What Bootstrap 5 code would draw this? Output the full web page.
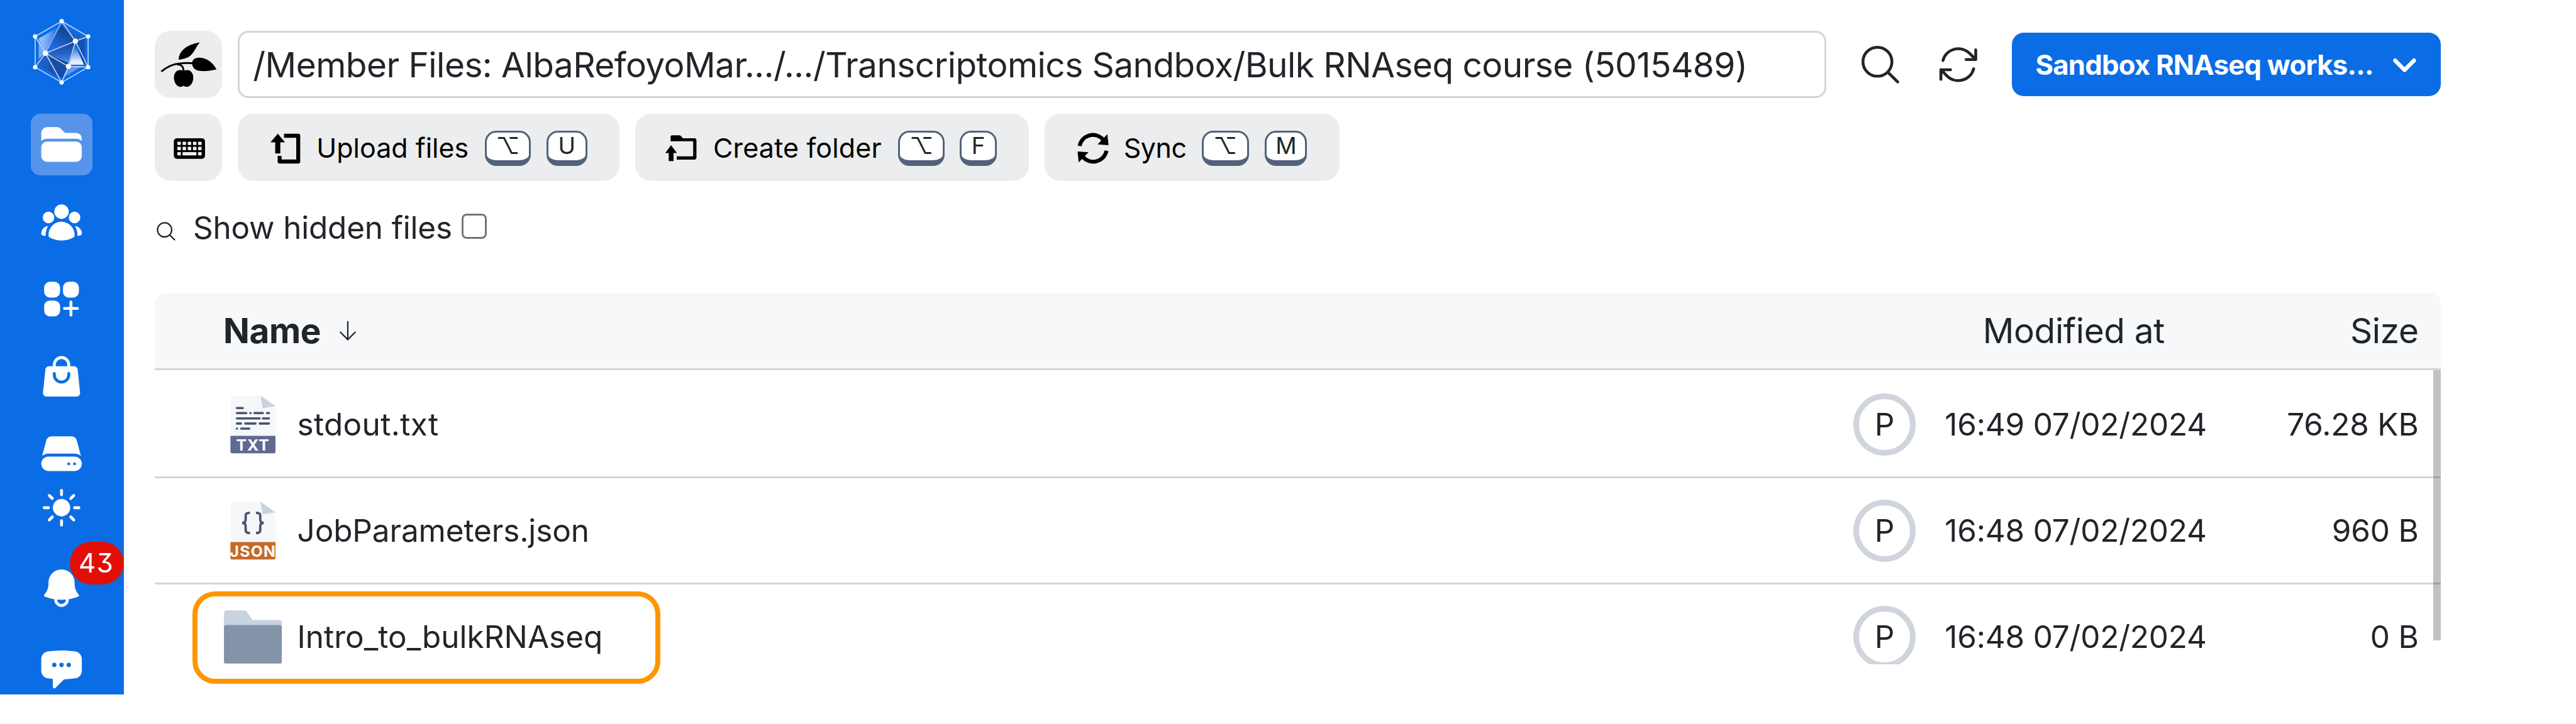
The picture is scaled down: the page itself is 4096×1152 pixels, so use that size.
<!DOCTYPE html>
<html lang="en">
<head>
<meta charset="utf-8">
<title>Files</title>
<link rel="stylesheet" href="https://cdn.jsdelivr.net/npm/bootstrap@5.3.0/dist/css/bootstrap.min.css">
<style>
body{font-family:Inter,"Liberation Sans",sans-serif;font-size:49.5px;line-height:1.2;color:#212529;background:#fff;width:4096px;height:1152px;overflow:hidden}
svg{display:block;flex:none}
span.t{white-space:nowrap}
.side-rail{width:196.6px;height:1105.4px;background:#0b6de6;color:#fff;padding-top:29.3px}
.rail-box{width:98.3px;height:98.3px;border-radius:15px}
.rail-box.on{background:#5694ec}
.rail-list{margin-top:44.7px;gap:24.6px}
.bell-item{margin-top:55.2px}
.chat-item{margin-top:55.3px}
.count-pill{top:-37px;left:49.2px;width:86.2px;height:68px;background:#e20f06;font-size:42px;letter-spacing:1.5px;font-feature-settings:"cv09","tnum"}
.main-area{margin-left:49px;width:3635.2px;padding-top:49px}
.soft-btn{background:#ecedef;border:0;border-radius:25px;height:107.4px;color:#000;font-size:43px;line-height:1.2}
.sq-btn{width:107.4px}
.tool-row{margin-top:24.5px;gap:24.6px}
.btn-upload{width:607.8px;padding:3px 0 0 50px}
.btn-create{width:626px;padding:3px 0 0 46.5px}
.btn-sync{width:469.8px;padding:3px 0 0 51px}
.path-field{width:2526.4px;height:107.4px;border:3px solid #cfd5dd;border-radius:17px;font-size:55px;padding-left:21.7px;padding-top:1px;margin-left:24.6px;letter-spacing:-.56px}
.top-icon{margin-left:49.5px}
.work-btn{background:#0b6de6;border-radius:19px;width:681.8px;height:101.6px;font-size:43.7px;letter-spacing:-.8px;padding:2.5px 36px 0 37.5px}
kbd.key-cap{background:#fff;color:#212529;border:3px solid #52627a;border-bottom-width:9px;border-radius:18px;height:55.4px;margin-left:24.6px;padding:0 0 4px;font:400 37px/1 Inter,"DejaVu Sans",sans-serif;letter-spacing:0}
.hidden-row{margin-top:44px;height:60px}
.table-wrap{margin-top:74.2px}
.head-row{height:123px;background:#f7f8fa;border-bottom:3px solid #cfd5dd;border-radius:18px 18px 0 0;font-size:55px;letter-spacing:-.4px}
.file-list{height:467.2px;padding-top:3px}
.file-row{height:169px;border-bottom:3px solid #d0d5dd}
.name-cell{padding-left:110.4px}
.name-text{margin-left:24.2px}
.icon-slot{width:92.4px}
.proj-ring{width:98.7px;height:98.7px;border:9.5px solid #d0d5dc}
.date-cell{margin-left:46.5px;width:439.5px;letter-spacing:-.2px}
.size-cell{width:349px;padding-right:35.2px;letter-spacing:-.2px}
.mark-box{left:60.6px;top:474.3px;width:743.8px;height:147.2px;border:8.2px solid #ff9500;border-radius:36px}
.scroll-thumb{right:0;top:123px;width:12px;height:429.5px;background:rgba(0,0,0,.24)}
.check-sq{width:39.8px;height:39.8px;border:3px solid #767676;border-radius:8px;margin:0 0 4px 15px}
</style>
</head>
<body>
<div class="d-flex align-items-start">
<nav class="side-rail d-flex flex-column align-items-center flex-shrink-0">
  <svg width="96" height="106.7" viewBox="38 20 360 400">
    <defs>
      <linearGradient id="ga" x1="80" y1="150" x2="190" y2="160" gradientUnits="userSpaceOnUse"><stop offset="0" stop-color="#a9c9fb"/><stop offset=".5" stop-color="#6fa4f4"/><stop offset="1" stop-color="#1f6ae0"/></linearGradient>
      <linearGradient id="gb" x1="250" y1="70" x2="170" y2="200" gradientUnits="userSpaceOnUse"><stop offset="0" stop-color="#123f86"/><stop offset="1" stop-color="#1f6ce8"/></linearGradient>
      <linearGradient id="gc" x1="0" y1="165" x2="0" y2="300" gradientUnits="userSpaceOnUse"><stop offset="0" stop-color="#15469a"/><stop offset=".5" stop-color="#2464cc"/><stop offset="1" stop-color="#5c97f2"/></linearGradient>
      <linearGradient id="gd" x1="0" y1="190" x2="0" y2="300" gradientUnits="userSpaceOnUse"><stop offset="0" stop-color="#2b6ad6"/><stop offset=".8" stop-color="#e3edfd"/></linearGradient>
      <linearGradient id="ge" x1="80" y1="250" x2="230" y2="340" gradientUnits="userSpaceOnUse"><stop offset="0" stop-color="#2264cf"/><stop offset="1" stop-color="#164a9e"/></linearGradient>
    </defs>
    <polygon points="81,141 200,72 122,229" fill="url(#ga)"/>
    <polygon points="81,141 122,229 81,300" fill="#76a8f5"/>
    <polygon points="218,60 122,229 300,157" fill="url(#gb)"/>
    <polygon points="232,74 356,141 300,157" fill="#2160c4"/>
    <polygon points="356,135 356,298 300,157" fill="#174fae"/>
    <polygon points="122,229 300,157 259,307" fill="url(#gc)"/>
    <polygon points="298,185 352,297 264,297" fill="url(#gd)"/>
    <polygon points="122,229 81,262 81,300 218,380" fill="url(#ge)"/>
    <polygon points="122,229 259,307 218,380" fill="#174da3"/>
    <polygon points="122,229 259,288 250,302" fill="#123f86"/>
    <polygon points="259,307 345,304 228,372" fill="#5e98f3"/>
    <polygon points="305,170 357,290 352,297" fill="#123c80"/>
    <g fill="none" stroke="#c3d7f8" stroke-width="6">
      <path d="M218 38L376 129V312L218 403L60 312V129Z"/>
      <path d="M218 38L300 157L376 129M300 157L376 312L259 307L300 157L122 229L60 129M122 229L60 312M122 229L218 403L259 307L122 229"/>
      <path d="M218 38L122 229" stroke="#8db5f5"/>
    </g>
    <g fill="#fff"><circle cx="218" cy="38" r="13"/><circle cx="376" cy="129" r="13"/><circle cx="376" cy="312" r="13"/><circle cx="218" cy="403" r="13"/><circle cx="60" cy="312" r="13"/><circle cx="60" cy="129" r="13"/><circle cx="300" cy="157" r="16"/><circle cx="122" cy="229" r="16"/><circle cx="259" cy="307" r="16"/></g>
  </svg>
  <div class="rail-list d-flex flex-column">
    <div class="rail-box on d-flex align-items-center justify-content-center"><svg width="73.7" height="73.7" viewBox="0 0 24 24" fill="currentColor"><path d="M19.5 21a3 3 0 003-3v-4.5a3 3 0 00-3-3h-15a3 3 0 00-3 3V18a3 3 0 003 3h15zM1.5 10.146V6a3 3 0 013-3h5.379a2.25 2.25 0 011.59.659l2.122 2.121c.14.141.331.22.53.22H19.5a3 3 0 013 3v1.146A4.483 4.483 0 0019.5 9h-15a4.483 4.483 0 00-3 1.146z"/></svg></div>
    <div class="rail-box d-flex align-items-center justify-content-center"><svg width="73.7" height="73.7" viewBox="0 0 24 24" fill="currentColor"><path d="M8.25 6.75a3.75 3.75 0 117.5 0 3.75 3.75 0 01-7.5 0zM15.75 9.75a3 3 0 116 0 3 3 0 01-6 0zM2.25 9.75a3 3 0 116 0 3 3 0 01-6 0zM6.31 15.117A6.745 6.745 0 0112 12a6.745 6.745 0 016.709 7.498.75.75 0 01-.372.568A12.696 12.696 0 0112 21.75c-2.305 0-4.47-.612-6.337-1.684a.75.75 0 01-.372-.568 6.787 6.787 0 011.019-4.38z"/><path d="M5.082 14.254a8.287 8.287 0 00-1.308 5.135 9.687 9.687 0 01-1.764-.44l-.115-.04a.563.563 0 01-.373-.487l-.01-.121a3.75 3.75 0 013.57-4.047zM20.226 19.389a8.287 8.287 0 00-1.308-5.135 3.75 3.75 0 013.57 4.047l-.01.121a.563.563 0 01-.373.486l-.115.04c-.567.2-1.156.349-1.764.441z"/></svg></div>
    <div class="rail-box d-flex align-items-center justify-content-center"><svg width="73.7" height="73.7" viewBox="0 0 24 24" fill="currentColor"><path d="M6 3a3 3 0 00-3 3v2.25a3 3 0 003 3h2.25a3 3 0 003-3V6a3 3 0 00-3-3H6zM15.75 3a3 3 0 00-3 3v2.25a3 3 0 003 3H18a3 3 0 003-3V6a3 3 0 00-3-3h-2.25zM6 12.75a3 3 0 00-3 3V18a3 3 0 003 3h2.25a3 3 0 003-3v-2.25a3 3 0 00-3-3H6zM17.625 13.5a.75.75 0 00-1.5 0v2.625H13.5a.75.75 0 000 1.5h2.625v2.625a.75.75 0 001.5 0v-2.625h2.625a.75.75 0 000-1.5h-2.625V13.5z"/></svg></div>
    <div class="rail-box d-flex align-items-center justify-content-center"><svg width="73.7" height="73.7" viewBox="0 0 24 24" fill="currentColor" fill-rule="evenodd"><path d="M7.5 6v.75H5.513c-.96 0-1.764.724-1.865 1.679l-1.263 12A1.875 1.875 0 004.25 22.5h15.5a1.875 1.875 0 001.865-2.071l-1.263-12a1.875 1.875 0 00-1.865-1.679H16.5V6a4.5 4.5 0 10-9 0zM12 3a3 3 0 00-3 3v.75h6V6a3 3 0 00-3-3zm-3 8.25a3 3 0 106 0v-.75a.75.75 0 011.5 0v.75a4.5 4.5 0 11-9 0v-.75a.75.75 0 011.5 0v.75z"/></svg></div>
    <div class="rail-box d-flex align-items-center justify-content-center"><svg width="73.7" height="73.7" viewBox="0 0 24 24" fill="currentColor" fill-rule="evenodd"><path d="M4.08 5.227A3 3 0 016.979 3H17.02a3 3 0 012.9 2.227l2.113 7.926A5.228 5.228 0 0018.75 12H5.25a5.228 5.228 0 00-3.284 1.153L4.08 5.227z"/><path d="M5.25 13.5a3.75 3.75 0 100 7.5h13.5a3.75 3.75 0 100-7.5H5.25zm10.5 4.5a.75.75 0 100-1.5.75.75 0 000 1.5zm3.75-.75a.75.75 0 11-1.5 0 .75.75 0 011.5 0z"/></svg></div>
  </div>
  <svg width="73.7" height="73.7" viewBox="0 0 24 24" fill="currentColor"><path d="M12 2.25a.75.75 0 01.75.75v2.25a.75.75 0 01-1.5 0V3a.75.75 0 01.75-.75zM7.5 12a4.5 4.5 0 119 0 4.5 4.5 0 01-9 0zM18.894 6.166a.75.75 0 00-1.06-1.06l-1.591 1.59a.75.75 0 101.06 1.061l1.591-1.59zM21.75 12a.75.75 0 01-.75.75h-2.25a.75.75 0 010-1.5H21a.75.75 0 01.75.75zM17.834 18.894a.75.75 0 001.06-1.06l-1.59-1.591a.75.75 0 10-1.061 1.06l1.59 1.591zM12 18a.75.75 0 01.75.75V21a.75.75 0 01-1.5 0v-2.25A.75.75 0 0112 18zM7.758 17.303a.75.75 0 00-1.061-1.06l-1.591 1.59a.75.75 0 001.06 1.061l1.591-1.59zM6 12a.75.75 0 01-.75.75H3a.75.75 0 010-1.5h2.25A.75.75 0 016 12zM6.697 7.757a.75.75 0 001.06-1.06l-1.59-1.591a.75.75 0 00-1.061 1.06l1.59 1.591z"/></svg>
  <div class="bell-item position-relative">
    <svg width="73.7" height="73.7" viewBox="0 0 24 24" fill="currentColor" fill-rule="evenodd"><path d="M5.25 9a6.75 6.75 0 0113.5 0v.75c0 2.123.8 4.057 2.118 5.52a.75.75 0 01-.297 1.206c-1.544.57-3.16.99-4.831 1.243a3.75 3.75 0 11-7.48 0 24.585 24.585 0 01-4.831-1.244.75.75 0 01-.298-1.205A8.217 8.217 0 005.25 9.75V9zm4.502 8.9a2.25 2.25 0 104.496 0 25.057 25.057 0 01-4.496 0z"/></svg>
    <div class="count-pill position-absolute rounded-pill d-flex align-items-center justify-content-center"><span class="t">43</span></div>
  </div>
  <svg class="chat-item" width="73.7" height="73.7" viewBox="0 0 24 24" fill="currentColor" fill-rule="evenodd"><path d="M4.848 2.771A49.144 49.144 0 0112 2.25c2.43 0 4.817.178 7.152.52 1.978.292 3.348 2.024 3.348 3.97v6.02c0 1.946-1.37 3.678-3.348 3.97a48.9 48.9 0 01-5.85.51l-4.54 4.5A.75.75 0 017.5 21.25v-4.25a48.527 48.527 0 01-2.652-.27C2.87 16.438 1.5 14.705 1.5 12.76V6.741c0-1.946 1.37-3.68 3.348-3.97zM8.25 8.625a1.125 1.125 0 100 2.25 1.125 1.125 0 000-2.25zM10.875 9.75a1.125 1.125 0 112.25 0 1.125 1.125 0 01-2.25 0zm4.875-1.125a1.125 1.125 0 100 2.25 1.125 1.125 0 000-2.25z"/></svg>
</nav>
<main class="main-area flex-shrink-0">
  <div class="d-flex align-items-center">
    <button class="soft-btn sq-btn p-0 d-block"><svg width="107.4" height="107.4" viewBox="771 94 402 402">
      <path d="M914 266C914 222 950 178 1040 163C1018 184 1006 228 975 248C958 259 940 262 914 266Z"/>
      <path d="M993 285C996 262 1014 254 1040 254C1082 256 1118 284 1139 324C1108 330 1080 335 1050 334C1016 333 994 318 993 285Z"/>
      <path d="M810 337C850 304 890 291 915 289C945 286 970 284 998 288M905 294C932 294 942 308 943 336" fill="none" stroke="#000" stroke-width="11"/>
      <path d="M943 334C958 326 978 326 988 338C1002 352 1004 378 995 401C985 424 963 436 943 422C923 436 901 424 891 401C882 378 884 352 898 338C908 326 928 326 943 334Z"/>
    </svg></button>
    <div class="path-field d-flex align-items-center"><span class="t">/Member Files: AlbaRefoyoMar.../.../Transcriptomics Sandbox/Bulk RNAseq course (5015489)</span></div>
    <svg class="top-icon" width="73.7" height="73.7" viewBox="0 0 24 24" fill="none" stroke="#212529" stroke-width="1.5" stroke-linecap="round" stroke-linejoin="round"><path d="M21 21l-5.197-5.197m0 0A7.5 7.5 0 105.196 5.196a7.5 7.5 0 0010.607 10.607z"/></svg>
    <svg class="top-icon" width="73.7" height="73.7" viewBox="0 0 24 24" fill="none" stroke="#212529" stroke-width="1.5" stroke-linecap="round" stroke-linejoin="round"><path d="M16.023 9.348h4.992v-.001M2.985 19.644v-4.992m0 0h4.992m-4.993 0l3.181 3.183a8.25 8.25 0 0013.803-3.7M4.031 9.865a8.25 8.25 0 0113.803-3.7l3.181 3.182m0-4.991v4.99"/></svg>
    <div class="work-btn text-white fw-bold d-flex align-items-center justify-content-between ms-auto"><span class="t">Sandbox RNAseq works...</span><svg width="43" height="30" viewBox="0 0 43 30" fill="none" stroke="#fff" stroke-width="6.4" stroke-linecap="round" stroke-linejoin="round"><path d="M6.4 7.2L21.4 22.4L36.4 7.2"/></svg></div>
  </div>
  <div class="tool-row d-flex">
    <button class="soft-btn sq-btn p-0 d-block"><svg width="107.4" height="107.4" viewBox="245.6 181 107.4 107.4"><rect x="276" y="220" width="49.6" height="32.7" rx="5"/><g fill="#ecedef"><rect x="281.6" y="225.5" width="5.6" height="5.3" rx="1"/><rect x="289.9" y="225.5" width="5.6" height="5.3" rx="1"/><rect x="298.1" y="225.5" width="5.6" height="5.3" rx="1"/><rect x="306.4" y="225.5" width="5.6" height="5.3" rx="1"/><rect x="314.6" y="225.5" width="5.6" height="5.3" rx="1"/><rect x="281.6" y="233.6" width="5.6" height="5.3" rx="1"/><rect x="289.9" y="233.6" width="5.6" height="5.3" rx="1"/><rect x="298.1" y="233.6" width="5.6" height="5.3" rx="1"/><rect x="306.4" y="233.6" width="5.6" height="5.3" rx="1"/><rect x="314.6" y="233.6" width="5.6" height="5.3" rx="1"/><rect x="281.6" y="242" width="5.6" height="5.3" rx="1"/><rect x="289.9" y="242" width="22.1" height="5.3" rx="1"/><rect x="314.6" y="242" width="5.6" height="5.3" rx="1"/></g></svg></button>
    <div class="soft-btn btn-upload d-flex align-items-center">
      <svg width="52" height="52" viewBox="428 210 52 52"><path d="M441.8 212.8L453.2 226.4H445.7V244.3H437.6V226.4H430Z"/><path d="M451.6 216H474.2V257H444.6V248" fill="none" stroke="#000" stroke-width="6.3" stroke-linejoin="round"/></svg>
      <span class="t" style="margin-left:23.7px">Upload files</span>
      <kbd class="key-cap d-flex align-items-center justify-content-center" style="margin-left:25.4px;width:73.6px"><span>⌥</span></kbd>
      <kbd class="key-cap d-flex align-items-center justify-content-center" style="width:64.7px">U</kbd>
    </div>
    <div class="soft-btn btn-create d-flex align-items-center">
      <svg width="53" height="52" viewBox="1057 210 53 52"><path d="M1068 231L1077.4 243.4H1072V256.2H1064.3V243.4H1058.8Z"/><path d="M1067.3 224.8V217.7Q1067.3 215.2 1069.8 215.2H1081Q1083 215.2 1084.3 216.9L1087 220H1105Q1108.4 220 1108.4 223.4V250.5Q1108.4 253.9 1105 253.9H1077V248.7H1103.2V224.8Z"/></svg>
      <span class="t" style="margin-left:24.5px;letter-spacing:.17px">Create folder</span>
      <kbd class="key-cap d-flex align-items-center justify-content-center" style="margin-left:26.3px;width:73.6px"><span>⌥</span></kbd>
      <kbd class="key-cap d-flex align-items-center justify-content-center" style="width:58.3px">F</kbd>
    </div>
    <div class="soft-btn btn-sync d-flex align-items-center">
      <svg width="52" height="52" viewBox="1712 210.4 52 52"><g id="sy"><path d="M1716.6 232.6A21.5 21.5 0 0 1 1754 222.5" fill="none" stroke="#000" stroke-width="6.2"/><path d="M1760.8 214L1762.6 231.4L1745.2 230.2Z"/></g><use href="#sy" transform="rotate(180 1738 236.4)"/></svg>
      <span class="t" style="margin-left:23.2px;letter-spacing:-.5px">Sync</span>
      <kbd class="key-cap d-flex align-items-center justify-content-center" style="margin-left:24.1px;width:75px"><span>⌥</span></kbd>
      <kbd class="key-cap d-flex align-items-center justify-content-center" style="margin-left:25.8px;width:67px">M</kbd>
    </div>
  </div>
  <div class="hidden-row d-flex align-items-center">
    <svg style="margin-top:12px" width="36" height="36" viewBox="0 0 24 24" fill="none" stroke="#212529" stroke-width="1.5" stroke-linecap="round" stroke-linejoin="round"><path d="M21 21l-5.197-5.197m0 0A7.5 7.5 0 105.196 5.196a7.5 7.5 0 0010.607 10.607z"/></svg>
    <span class="t" style="margin-left:25.3px;letter-spacing:-.2px">Show hidden files</span>
    <span class="check-sq"></span>
  </div>
  <div class="table-wrap position-relative">
    <div class="head-row d-flex align-items-center">
      <span class="t fw-bold" style="margin-left:109.3px">Name</span>
      <svg style="margin-left:25px" width="36" height="36" viewBox="0 0 36 36" fill="none" stroke="#212529" stroke-width="2.2"><path d="M18 3V32M5.6 20L18 32.4L30.4 20"/></svg>
      <span class="t ms-auto">Modified at</span>
      <span class="t text-end" style="width:439px;padding-right:35.2px">Size</span>
    </div>
    <div class="file-list overflow-hidden">
      <div class="file-row d-flex align-items-center">
        <div class="name-cell d-flex align-items-center flex-grow-1"><div class="icon-slot d-flex justify-content-center"><svg width="74" height="93" viewBox="365 629 74 93"><path d="M369 629.4H414.4L438 646.2V719Q438 721.3 435.7 721.3H369Q367.2 721.3 367.2 719V631.2Q367.2 629.4 369 629.4Z" fill="#f5f7f9"/><path d="M414.4 629.4L438 646.2L417.6 649.4Z" fill="#c9d3df"/><g stroke="#47566f" stroke-width="3.6" stroke-linecap="round"><path d="M376.8 649.2H386M376.8 657.3H391.5M398 657.3H398.4M404.6 657.3H418M424.6 657.3H427.6M376.8 665.7H412.8M418 665.7H427.6M376.8 673.9H383.2M390 673.9H406.4M413 673.9H427.6M376.6 682H376.8M383.6 682H396.4"/></g><path d="M366.4 693.6H438V718.8Q438 721.3 435.5 721.3H368.9Q366.4 721.3 366.4 718.8Z" fill="#5f6a90"/><text x="375.4" y="717.4" font-size="24.8" font-weight="700" fill="#fff" textLength="52.4">TXT</text></svg></div><span class="t name-text" style="letter-spacing:.3px">stdout.txt</span></div>
        <div class="proj-ring rounded-circle d-flex align-items-center justify-content-center"><span>P</span></div>
        <span class="t date-cell">16:49 07/02/2024</span>
        <span class="t size-cell text-end">76.28 KB</span>
      </div>
      <div class="file-row d-flex align-items-center">
        <div class="name-cell d-flex align-items-center flex-grow-1"><div class="icon-slot d-flex justify-content-center"><svg width="74" height="93" viewBox="365 629 74 93"><path d="M369 629.4H414.4L438 646.2V719Q438 721.3 435.7 721.3H369Q367.2 721.3 367.2 719V631.2Q367.2 629.4 369 629.4Z" fill="#f5f7f9"/><path d="M414.4 629.4L438 646.2L417.6 649.4Z" fill="#c9d3df"/><path d="M397.4 647.2H395.4Q390.6 647.2 390.6 652V657.5Q390.6 663 385 663Q390.6 663 390.6 668.5V674Q390.6 679 395.4 679H397.4M407 647.2H409Q413.8 647.2 413.8 652V657.5Q413.8 663 419.4 663Q413.8 663 413.8 668.5V674Q413.8 679 409 679H407" fill="none" stroke="#47566f" stroke-width="3.8"/><path d="M366.4 693.6H438V718.8Q438 721.3 435.5 721.3H368.9Q366.4 721.3 366.4 718.8Z" fill="#c66a28"/><text x="365.4" y="717.4" font-size="24.8" font-weight="700" fill="#fff" textLength="72.6">JSON</text></svg></div><span class="t name-text" style="letter-spacing:-.15px">JobParameters.json</span></div>
        <div class="proj-ring rounded-circle d-flex align-items-center justify-content-center"><span>P</span></div>
        <span class="t date-cell">16:48 07/02/2024</span>
        <span class="t size-cell text-end">960 B</span>
      </div>
      <div class="file-row d-flex align-items-center">
        <div class="name-cell d-flex align-items-center flex-grow-1"><div class="icon-slot d-flex justify-content-center"><svg width="92.4" height="85" viewBox="356.1 970.6 92.4 85"><path d="M356.2 1000V975.8Q356.2 970.8 361.2 970.8H389Q391 970.8 392.3 972.5L401.9 986.2H443.5Q448.5 986.2 448.5 991.2V1000Z" fill="#c9d3df"/><path d="M356.2 998Q356.2 994 360.2 994H444.5Q448.5 994 448.5 998V1052.5Q448.5 1055.3 445.7 1055.3H359Q356.2 1055.3 356.2 1052.5Z" fill="#8393a8"/></svg></div><span class="t name-text">Intro_to_bulkRNAseq</span></div>
        <div class="proj-ring rounded-circle d-flex align-items-center justify-content-center"><span>P</span></div>
        <span class="t date-cell">16:48 07/02/2024</span>
        <span class="t size-cell text-end">0 B</span>
      </div>
    </div>
    <div class="scroll-thumb position-absolute"></div>
    <div class="mark-box position-absolute"></div>
  </div>
</main>
</div>
<script src="https://cdn.jsdelivr.net/npm/bootstrap@5.3.0/dist/js/bootstrap.bundle.min.js"></script>
</body>
</html>
